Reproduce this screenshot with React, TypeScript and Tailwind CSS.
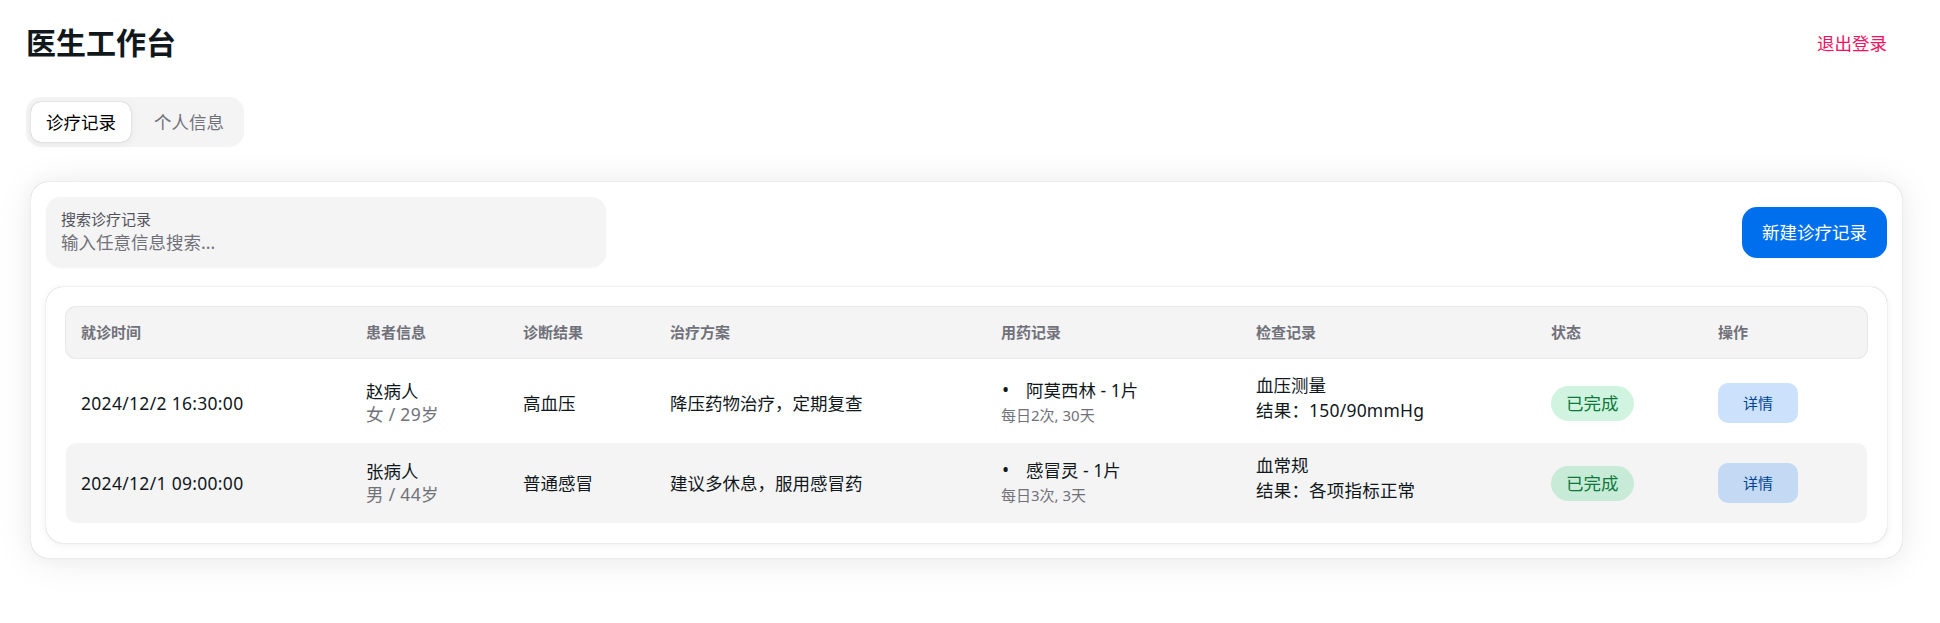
import { useState } from 'react';

type Record = {
  id: number;
  time: string;
  name: string;
  gender: string;
  age: number;
  diagnosis: string;
  plan: string;
  medicine: string;
  usage: string;
  exam: string;
  result: string;
};

const records: Record[] = [
  {
    id: 1,
    time: '2024/12/2 16:30:00',
    name: '赵病人',
    gender: '女',
    age: 29,
    diagnosis: '高血压',
    plan: '降压药物治疗，定期复查',
    medicine: '阿莫西林 - 1片',
    usage: '每日2次, 30天',
    exam: '血压测量',
    result: '结果：150/90mmHg',
  },
  {
    id: 2,
    time: '2024/12/1 09:00:00',
    name: '张病人',
    gender: '男',
    age: 44,
    diagnosis: '普通感冒',
    plan: '建议多休息，服用感冒药',
    medicine: '感冒灵 - 1片',
    usage: '每日3次, 3天',
    exam: '血常规',
    result: '结果：各项指标正常',
  },
];

const columns = ['就诊时间', '患者信息', '诊断结果', '治疗方案', '用药记录', '检查记录', '状态', '操作'];

const gridCols = 'grid grid-cols-[285px_157px_147px_331px_255px_295px_167px_1fr]';

export default function App() {
  const [tab, setTab] = useState<'records' | 'profile'>('records');

  return (
    <div className="min-h-screen bg-white pl-[26px] pr-[33px] pt-[18px] font-['Noto_Sans','Noto_Sans_CJK_SC',sans-serif] text-[#11181c]">
      <div className="flex h-[50px] items-center justify-between">
        <h1 className="text-[30px] font-bold leading-[40px]">医生工作台</h1>
        <button className="flex h-[50px] items-center rounded-[15px] px-[20px] text-[17.5px] text-[#f31260]">
          退出登录
        </button>
      </div>

      <div className="mt-[29px] inline-flex gap-[4px] rounded-[15px] bg-[#f4f4f5] p-[5px]">
        <button
          onClick={() => setTab('records')}
          className={`h-[40px] rounded-[10px] px-[15px] text-[17.5px] ${
            tab === 'records' ? 'bg-white text-black shadow-[0_0_5px_rgba(0,0,0,0.02),0_2px_10px_rgba(0,0,0,0.06),0_0_1px_rgba(0,0,0,0.3)]' : 'text-[#71717a]'
          }`}
        >
          诊疗记录
        </button>
        <button
          onClick={() => setTab('profile')}
          className={`h-[40px] rounded-[10px] pl-[19px] pr-[15px] text-[17.5px] ${
            tab === 'profile' ? 'bg-white text-black shadow-[0_0_5px_rgba(0,0,0,0.02),0_2px_10px_rgba(0,0,0,0.06),0_0_1px_rgba(0,0,0,0.3)]' : 'text-[#71717a]'
          }`}
        >
          个人信息
        </button>
      </div>

      <div className="mx-[5px] mt-[35px] rounded-[17px] bg-white p-[15px] shadow-[0_0_19px_rgba(0,0,0,0.03),0_3px_38px_rgba(0,0,0,0.08),0_0_1px_rgba(0,0,0,0.3)]">
        <div className="flex items-center justify-between">
          <div className="flex h-[70px] w-[560px] flex-col justify-center rounded-[15px] bg-[#f4f4f5] px-[15px] shadow-[0_1px_2px_rgba(0,0,0,0.05)]">
            <label className="text-[15px] leading-[20px] text-[#52525b]">搜索诊疗记录</label>
            <input
              placeholder="输入任意信息搜索..."
              className="bg-transparent text-[17.5px] leading-[26px] outline-none placeholder:text-[#71717a]"
            />
          </div>
          <button className="h-[51px] rounded-[15px] bg-[#006fee] px-[20px] text-[17.5px] text-white">新建诊疗记录</button>
        </div>

        <div className="mt-[20px] rounded-[17px] bg-white p-[20px] shadow-[0_0_5px_rgba(0,0,0,0.02),0_2px_10px_rgba(0,0,0,0.06),0_0_1px_rgba(0,0,0,0.3)]">
          <div className={`${gridCols} h-[51px] items-center rounded-[10px] bg-[#f4f4f5] shadow-[0_0_0_1px_#e8e8ea]`}>
            {columns.map((c) => (
              <div key={c} className="px-[15px] text-[15px] font-semibold text-[#71717a]">
                {c}
              </div>
            ))}
          </div>
          <div className="h-[5px]" />
          {records.map((r, i) => (
            <div
              key={r.id}
              className={`${gridCols} h-[80px] items-center rounded-[10px] text-[17.5px] ${i % 2 === 1 ? 'bg-[#f4f4f5]' : ''}`}
            >
              <div className="px-[15px] tracking-[0.3px]">{r.time}</div>
              <div className="px-[15px] leading-[23px]">
                <div>{r.name}</div>
                <div className="tracking-[0.3px] text-[#71717a]">
                  {r.gender} / {r.age}岁
                </div>
              </div>
              <div className="px-[15px]">{r.diagnosis}</div>
              <div className="px-[15px]">{r.plan}</div>
              <div className="px-[15px] leading-[25px]">
                <div>
                  <span className="inline-block w-[25px] pl-[1px] text-[19px]">•</span>
                  {r.medicine}
                </div>
                <div className="text-[15px] text-[#71717a]">{r.usage}</div>
              </div>
              <div className="px-[15px] pb-[10px] leading-[25px]">
                <div>{r.exam}</div>
                <div className="tracking-[0.2px]">{r.result}</div>
              </div>
              <div className="px-[15px]">
                <span className="inline-flex h-[35px] items-center rounded-full bg-[#17c964]/20 px-[15px] text-[17.5px] text-[#0e793c]">
                  已完成
                </span>
              </div>
              <div className="px-[15px]">
                <button className="h-[40px] w-[80px] rounded-[10px] bg-[#006fee]/20 text-[15px] text-[#004493]">详情</button>
              </div>
            </div>
          ))}
        </div>
      </div>
    </div>
  );
}
